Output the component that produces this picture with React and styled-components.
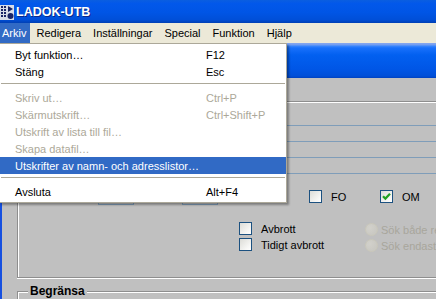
import React from "react";
import styled, { createGlobalStyle } from "styled-components";

const menus = ["Arkiv", "Redigera", "Inställningar", "Special", "Funktion", "Hjälp"];

const fileMenu = [
  { label: "Byt funktion…", key: "F12" },
  { label: "Stäng", key: "Esc" },
  { sep: true },
  { label: "Skriv ut…", key: "Ctrl+P", disabled: true },
  { label: "Skärmutskrift…", key: "Ctrl+Shift+P", disabled: true },
  { label: "Utskrift av lista till fil…", disabled: true },
  { label: "Skapa datafil…", disabled: true },
  { label: "Utskrifter av namn- och adresslistor…", active: true },
  { sep: true },
  { label: "Avsluta", key: "Alt+F4" },
];

export default function App() {
  return (
    <Screen>
      <GlobalStyle />
      {/* window title */}
      <TitleBar>
        <AppIcon />
        <Title>LADOK-UTB</Title>
      </TitleBar>

      <MenuBar>
        {menus.map((m, i) => (
          <MenuTitle key={m} $active={i === 0} $first={i === 0}>
            {m}
          </MenuTitle>
        ))}
      </MenuBar>

      <Workspace>
        <Dropdown>
          {fileMenu.map((item, i) =>
            item.sep ? (
              <Separator key={i} />
            ) : (
              <DropItem key={i} $disabled={item.disabled} $active={item.active}>
                <span>{item.label}</span>
                <span>{item.key}</span>
              </DropItem>
            )
          )}
        </Dropdown>

        <ChildWindow>
          <ChildTitle />
          <ChildBody>
            <GroupBox>
              <FieldLines>
                <FieldLine />
                <FieldLine />
                <FieldLine />
              </FieldLines>

              <FormRow>
                <TextBox $left={80} />
                <TextBox $left={48} />
                <Option $left={21} $width={70}>
                  <CheckBox />
                </Option>
                <Option $width={71}>
                  <CheckBox />
                  <span>FO</span>
                </Option>
                <Option>
                  <CheckBox checked />
                  <span>OM</span>
                </Option>
              </FormRow>

              <OptionGrid>
                <Option>
                  <CheckBox />
                  <span>Avbrott</span>
                </Option>
                <RadioOption>
                  <Radio />
                  <span>Sök både registrerade och oregistrerade</span>
                </RadioOption>
                <Option>
                  <CheckBox />
                  <span>Tidigt avbrott</span>
                </Option>
                <RadioOption>
                  <Radio />
                  <span>Sök endast registrerade</span>
                </RadioOption>
              </OptionGrid>
            </GroupBox>

            <LimitSet>
              <Legend>Begränsa</Legend>
            </LimitSet>
          </ChildBody>
        </ChildWindow>
      </Workspace>
    </Screen>
  );
}

function AppIcon() {
  return (
    <IconSvg width="14" height="15" viewBox="0 0 14 15">
      <rect x="0" y="0" width="14" height="15" fill="#d8dde8" />
      <g fill="#1a2566">
        <rect x="1" y="1" width="2" height="2" />
        <rect x="4" y="1" width="2" height="2" />
        <rect x="1" y="4" width="2" height="2" />
        <rect x="4" y="4" width="2" height="2" />
        <rect x="1" y="7" width="2" height="2" />
        <rect x="4" y="7" width="2" height="2" />
        <rect x="1" y="10" width="2" height="2" />
        <rect x="4" y="10" width="2" height="2" />
        <polygon points="8,1 13,4 8,7" />
        <circle cx="10.5" cy="11" r="3" />
      </g>
    </IconSvg>
  );
}

function CheckBox({ checked }) {
  return (
    <Box>
      {checked && (
        <svg width="11" height="11" viewBox="0 0 11 11">
          <path d="M2 5.2 L4.4 7.6 L9 2.8" stroke="#21a121" strokeWidth="2.2" fill="none" />
        </svg>
      )}
    </Box>
  );
}

const GlobalStyle = createGlobalStyle`
  html, body {
    margin: 0;
    padding: 0;
    overflow: hidden;
  }
  body {
    font-family: "Liberation Sans", Arial, sans-serif;
    font-size: 11px;
    background: #c0c0c0;
  }
`;

const Screen = styled.div`
  width: 436px;
  height: 299px;
  display: flex;
  flex-direction: column;
  overflow: hidden;
`;

const TitleBar = styled.div`
  height: 23px;
  flex: none;
  display: flex;
  align-items: center;
  gap: 2px;
  background: linear-gradient(
    to bottom,
    #0a5ee0 0%,
    #0258ea 15%,
    #0055e5 55%,
    #004fd8 85%,
    #003fb4 100%
  );
`;

const IconSvg = styled.svg`
  display: block;
  margin-top: 1px;
`;

const Title = styled.span`
  color: #fff;
  font-weight: bold;
  font-size: 12.5px;
  text-shadow: 1px 1px 0 #0a2a8a;
`;

const MenuBar = styled.div`
  height: 20px;
  flex: none;
  display: flex;
  background: #ece9d8;
`;

const MenuTitle = styled.div`
  display: flex;
  align-items: center;
  padding: ${(p) => (p.$first ? "0 4px 0 2px" : "0 6px")};
  background: ${(p) => (p.$active ? "#316ac5" : "transparent")};
  color: ${(p) => (p.$active ? "#fff" : "#000")};
`;

const Workspace = styled.div`
  position: relative;
  flex: 1;
  display: flex;
`;

const Dropdown = styled.div`
  position: absolute;
  top: 0;
  left: -1px;
  z-index: 2;
  width: 288px;
  box-sizing: border-box;
  padding: 2px 0;
  background: #fff;
  border: 1px solid #aca899;
  box-shadow: 2px 2px 2px rgba(0, 0, 0, 0.35);
`;

const DropItem = styled.div`
  height: 17px;
  display: grid;
  grid-template-columns: 191px 1fr;
  align-items: center;
  padding-left: 15px;
  white-space: nowrap;
  color: ${(p) => (p.$active ? "#fff" : p.$disabled ? "#aca899" : "#000")};
  background: ${(p) => (p.$active ? "#316ac5" : "transparent")};
`;

const Separator = styled.div`
  height: 1px;
  margin: 3px 1px 5px;
  background: #aca899;
`;

const ChildWindow = styled.div`
  flex: 1;
  display: flex;
  flex-direction: column;
  border-left: 2px solid #1650e0;
`;

const ChildTitle = styled.div`
  height: 35px;
  flex: none;
  background: linear-gradient(
    to bottom,
    #88a8ee 0px,
    #6f9cf2 2px,
    #3a86fb 3px,
    #1870fb 5px,
    #0260f0 12px,
    #0056e6 26px,
    #004fd8 33px,
    #0042c0 35px
  );
`;

const ChildBody = styled.div`
  flex: 1;
  background: #c0c0c0;
  padding: 23px 0 0 15px;
`;

const GroupBox = styled.div`
  height: 177px;
  box-sizing: border-box;
  border-top: 1px solid #8e8e8e;
  border-left: 1px solid #8e8e8e;
  border-bottom: 1px solid #8e8e8e;
  box-shadow: inset 1px 1px 0 #fff, 0 1px 0 #fff;
`;

const FieldLines = styled.div`
  margin: 23px 0 0 80px;
`;

const FieldLine = styled.div`
  height: 15px;
  border-top: 1px solid #7f9db9;
  &:last-child {
    border-bottom: 1px solid #7f9db9;
  }
`;

const FormRow = styled.div`
  margin-top: 11px;
  height: 20px;
  display: flex;
  align-items: flex-start;
`;

const TextBox = styled.div`
  width: 36px;
  height: 20px;
  box-sizing: border-box;
  margin-left: ${(p) => p.$left}px;
  border: 1px solid #7f9db9;
`;

const Option = styled.div`
  display: flex;
  align-items: center;
  gap: 9px;
  height: 13px;
  margin-left: ${(p) => p.$left || 0}px;
  width: ${(p) => (p.$width ? `${p.$width}px` : "auto")};
  color: #000;
  white-space: nowrap;
  ${FormRow} & {
    margin-top: 5px;
  }
`;

const Box = styled.span`
  width: 13px;
  height: 13px;
  flex: none;
  box-sizing: border-box;
  border: 1px solid #1c5180;
  background: linear-gradient(135deg, #dcdcd7 0%, #f6f6f4 70%, #fff 100%);
  display: flex;
  align-items: center;
  justify-content: center;
`;

const OptionGrid = styled.div`
  margin: 17px 0 0 221px;
  display: grid;
  grid-template-columns: 126px 1fr;
  grid-auto-rows: 16px;
  align-items: start;
`;

const RadioOption = styled.div`
  display: flex;
  align-items: center;
  gap: 3px;
  margin-top: 1px;
  height: 13px;
  color: #a8a69c;
  white-space: nowrap;
`;

const Radio = styled.span`
  width: 13px;
  height: 13px;
  flex: none;
  box-sizing: border-box;
  border-radius: 50%;
  border: 1px solid #cac8bb;
  background: radial-gradient(circle at 35% 35%, #d2d1cb 0%, #c6c5bf 100%);
`;

const LimitSet = styled.fieldset`
  margin: 6px 0 0 0;
  padding: 0 0 0 10px;
  min-width: 0;
  height: 40px;
  border: none;
  border-top: 1px solid #8e8e8e;
  border-left: 1px solid #8e8e8e;
  box-shadow: inset 1px 1px 0 #fff;
`;

const Legend = styled.legend`
  padding: 0 2px;
  font-weight: bold;
  font-size: 12px;
  line-height: 14px;
  background: #c0c0c0;
  color: #000;
`;
